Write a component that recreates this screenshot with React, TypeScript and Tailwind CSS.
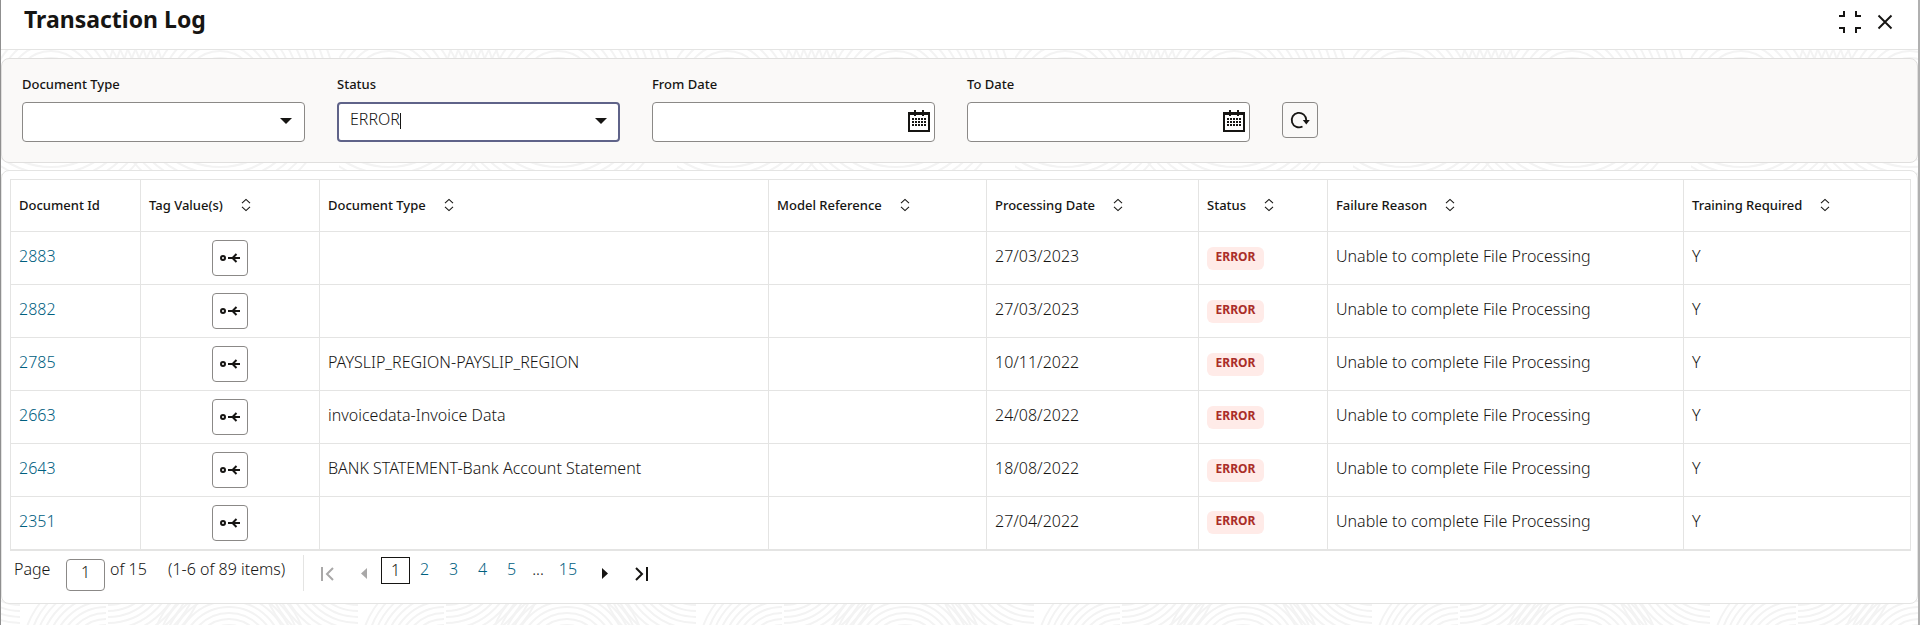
import { useState } from "react";
import type { ReactNode } from "react";

type Row = { id: string; docType: string; date: string };

const ROWS: Row[] = [
  { id: "2883", docType: "", date: "27/03/2023" },
  { id: "2882", docType: "", date: "27/03/2023" },
  { id: "2785", docType: "PAYSLIP_REGION-PAYSLIP_REGION", date: "10/11/2022" },
  { id: "2663", docType: "invoicedata-Invoice Data", date: "24/08/2022" },
  { id: "2643", docType: "BANK STATEMENT-Bank Account Statement", date: "18/08/2022" },
  { id: "2351", docType: "", date: "27/04/2022" },
];

const COLUMNS = [
  { label: "Document Id", width: "w-[130px]", sortable: false },
  { label: "Tag Value(s)", width: "w-[179px]", sortable: true },
  { label: "Document Type", width: "w-[449px]", sortable: true },
  { label: "Model Reference", width: "w-[218px]", sortable: true },
  { label: "Processing Date", width: "w-[212px]", sortable: true },
  { label: "Status", width: "w-[129px]", sortable: true },
  { label: "Failure Reason", width: "w-[356px]", sortable: true },
  { label: "Training Required", width: "w-[227px]", sortable: true },
];

function steps(from: number, to: number, by: number) {
  const out: number[] = [];
  for (let r = from; r <= to; r += by) out.push(r);
  return out;
}

/* Faint ripple texture behind the panels, repeated every 338px. */
function Ripples() {
  return (
    <svg aria-hidden="true" className="pointer-events-none absolute inset-0 h-full w-full">
      <defs>
        <pattern id="ripples" width="338" height="700" patternUnits="userSpaceOnUse">
          <g fill="none" stroke="#f3f3f3" strokeWidth="2">
            {[50, 219].map((cx) =>
              steps(30, 120, 7).map((r) => <circle key={`${cx}-${r}`} cx={cx} cy="88" r={r} />)
            )}
            {steps(30, 84, 6).map((r) => (
              <path key={`a${r}`} d={`M${105 - r} 655A${r} ${r} 0 0 1 105 ${655 - r}`} />
            ))}
            {steps(45, 100, 6).map((r) => (
              <path key={`b${r}`} d={`M107 ${560 + r}A${r} ${r} 0 0 0 ${107 + r} 560`} />
            ))}
            {steps(30, 78, 6).map((r) => (
              <path key={`c${r}`} d={`M${228 - r} 655A${r} ${r} 0 0 1 ${228 + r} 655`} />
            ))}
            {[19, 357].map((cx) =>
              steps(45, 104, 6).map((r) => (
                <path key={`d${cx}-${r}`} d={`M${cx - r} 560A${r} ${r} 0 0 0 ${cx} ${560 + r}`} />
              ))
            )}
          </g>
        </pattern>
      </defs>
      <rect width="100%" height="100%" fill="url(#ripples)" />
    </svg>
  );
}

function CalendarIcon() {
  return (
    <svg width="22" height="22" viewBox="0 0 22 22" fill="#161513" aria-hidden="true">
      <path fillRule="evenodd" d="M0 2h22v20H0zM2 5v15h18V5z" />
      <path d="M6 0h2v6H6zM14 0h2v6h-2z" />
      {[8, 11, 14].map((y) =>
        [4, 7, 10, 13, 16].map((x) => <rect key={`${x}-${y}`} x={x} y={y} width="2" height="2" />)
      )}
    </svg>
  );
}

function RefreshIcon() {
  return (
    <svg width="20" height="20" viewBox="0 0 20 20" aria-hidden="true">
      <path d="M12.5 16.5A7.3 7.3 0 1 1 16.3 10.2" fill="none" stroke="#161513" strokeWidth="1.8" />
      <path d="M12.8 10h7L16.3 14.4z" fill="#161513" />
    </svg>
  );
}

function TagIcon() {
  return (
    <svg width="20" height="12" viewBox="0 0 20 12" fill="none" stroke="#161513" strokeWidth="2" aria-hidden="true">
      <circle cx="3" cy="6" r="2" />
      <path d="M8 6h12M16.500 2L12.500 6l4 4" />
    </svg>
  );
}

function SortIcon() {
  return (
    <svg width="10" height="14" viewBox="0 0 10 14" fill="none" stroke="#161513" strokeWidth="1.1" aria-hidden="true">
      <path d="M1 5.2L5 1.400l4 3.800M1 8.800l4 3.800 4-3.800" />
    </svg>
  );
}

function Field({ id, label, children }: { id: string; label: string; children: ReactNode }) {
  return (
    <div className="flex w-[283px] flex-col">
      <label htmlFor={id} className="pb-2 text-[13px] leading-5 font-medium">
        {label}
      </label>
      <div className="relative flex">{children}</div>
    </div>
  );
}

const inputBase =
  "h-10 w-full rounded bg-white pl-[11px] pr-10 pb-1.5 text-base font-[350] text-[#161513] outline-none";

function ComboField({ id, label, initial, active }: { id: string; label: string; initial: string; active?: boolean }) {
  const [value, setValue] = useState(initial);
  return (
    <Field id={id} label={label}>
      <input
        id={id}
        role="combobox"
        aria-expanded="false"
        aria-controls={`${id}-list`}
        autoComplete="off"
        value={value}
        onChange={(e) => setValue(e.target.value)}
        className={`${inputBase} ${active ? "border-2 border-[#5f6389]" : "border border-[#8b8987]"}`}
      />
      {active && <span className="absolute top-[11px] left-[63px] h-4 w-px bg-[#161513]" />}
      <svg
        width="12"
        height="6"
        viewBox="0 0 12 6"
        fill="#161513"
        aria-hidden="true"
        className="pointer-events-none absolute top-4 right-[13px]"
      >
        <path d="M0 0h12L6 6z" />
      </svg>
    </Field>
  );
}

function DateField({ id, label }: { id: string; label: string }) {
  return (
    <Field id={id} label={label}>
      <input id={id} type="text" className={`${inputBase} border border-[#8b8987]`} />
      <button type="button" aria-label={`Select ${label}`} className="absolute top-2 right-[5px]">
        <CalendarIcon />
      </button>
    </Field>
  );
}

function Cell({ children, className = "" }: { children?: ReactNode; className?: string }) {
  return <td className={`border border-[#e4e4e3] px-2 ${className}`}>{children}</td>;
}

export default function App() {
  return (
    <main className="relative flex min-h-screen flex-col border-r-2 border-l border-r-[#b0b0b0] border-l-[#8f8f8f] bg-white font-[350] text-[#161513] [font-family:'Noto_Sans','Open_Sans',sans-serif]">
      <Ripples />

      <header className="relative flex h-[50px] items-start justify-between border-b border-[#e4e4e3] bg-white pr-[25px] pl-[23px]">
        <h1 className="pt-[3px] text-[23px] leading-8 font-bold">Transaction Log</h1>
        <div className="flex items-center gap-4 pt-[11px]">
          <button type="button" aria-label="Exit full screen">
            <svg width="22" height="22" viewBox="0 0 22 22" fill="none" stroke="#161513" strokeWidth="2">
              <path d="M0 5h5V0M17 0v5h5M0 17h5v5M22 17h-5v5" />
            </svg>
          </button>
          <button type="button" aria-label="Close">
            <svg width="16" height="16" viewBox="0 0 16 16" fill="none" stroke="#161513" strokeWidth="1.9">
              <path d="M1.500 1.500l13 13M14.500 1.500L1.500 14.500" />
            </svg>
          </button>
        </div>
      </header>

      <section
        aria-label="Filters"
        className="relative mt-2 flex h-[105px] items-start gap-8 rounded-lg border border-[#e0dfde] bg-[#faf9f8] px-5 pt-[15px]"
      >
        <ComboField id="document-type" label="Document Type" initial="" />
        <ComboField id="status" label="Status" initial="ERROR" active />
        <DateField id="from-date" label="From Date" />
        <DateField id="to-date" label="To Date" />
        <button
          type="button"
          aria-label="Refresh"
          className="mt-7 flex size-9 items-center justify-center rounded border border-[#8b8987]"
        >
          <RefreshIcon />
        </button>
      </section>

      <section
        aria-label="Transactions"
        className="relative mt-[7px] rounded-lg border border-[#e4e4e3] bg-white px-2 pt-2 pb-3"
      >
        <table className="w-full table-fixed border-collapse border-b-2 border-[#e4e4e3] text-left">
          <thead>
            <tr className="h-[52px]">
              {COLUMNS.map((c) => (
                <th
                  key={c.label}
                  scope="col"
                  className={`${c.width} border border-[#e4e4e3] px-2 text-[13px] leading-5 font-medium`}
                >
                  <span className="flex items-center gap-[18px] pb-0.5">
                    {c.label}
                    {c.sortable && (
                      <button type="button" aria-label={`Sort by ${c.label}`}>
                        <SortIcon />
                      </button>
                    )}
                  </span>
                </th>
              ))}
            </tr>
          </thead>
          <tbody className="text-base leading-5">
            {ROWS.map((r) => (
              <tr key={r.id} className="h-[53px]">
                <Cell className="pb-1">
                  <a href={`#${r.id}`} className="text-[#00607f]">
                    {r.id}
                  </a>
                </Cell>
                <Cell>
                  <button
                    type="button"
                    aria-label={`Tag values of ${r.id}`}
                    className="mx-auto flex size-9 items-center justify-center rounded border border-[#8b8987] bg-white"
                  >
                    <TagIcon />
                  </button>
                </Cell>
                <Cell className="pb-1">{r.docType}</Cell>
                <Cell />
                <Cell className="pb-1">{r.date}</Cell>
                <Cell>
                  <span className="flex h-[23px] w-[57px] justify-center rounded-md bg-[#ffebe8] text-xs leading-5 font-bold text-[#aa2e28]">
                    ERROR
                  </span>
                </Cell>
                <Cell className="pb-1">Unable to complete File Processing</Cell>
                <Cell className="pb-1">Y</Cell>
              </tr>
            ))}
          </tbody>
        </table>

        <nav aria-label="Pagination" className="flex items-start pt-1 pl-1 text-base leading-7">
          <label htmlFor="page" className="w-[52px]">
            Page
          </label>
          <input
            id="page"
            type="text"
            defaultValue="1"
            className="mt-1 h-8 w-[39px] rounded border border-[#8b8987] bg-white pb-1.5 text-center outline-none"
          />
          <span className="w-[63px] pl-[5px]">of 15</span>
          <span className="w-[135px] whitespace-nowrap">(1-6 of 89 items)</span>
          <div className="flex h-9 items-start border-l border-[#e4e4e3] pt-0.5 pl-[17px]">
            <button type="button" aria-label="First page" disabled className="w-10 pt-2.5">
              <svg width="13" height="14" viewBox="0 0 13 14" fill="none" stroke="#a9a8a8" strokeWidth="2">
                <path d="M1 0v14M12 1L6 7l6 6" />
              </svg>
            </button>
            <button type="button" aria-label="Previous page" disabled className="w-5 pt-2.5">
              <svg width="6" height="13" viewBox="0 0 6 13" fill="#a9a8a8">
                <path d="M6 1v11L0 6.500z" />
              </svg>
            </button>
            <button type="button" aria-current="page" className="h-[27px] w-[29px] border border-[#161513] leading-6">
              1
            </button>
            {["2", "3", "4", "5"].map((p) => (
              <a key={p} href={`#page-${p}`} className="w-[29px] text-center leading-6 text-[#00607f]">
                {p}
              </a>
            ))}
            <span className="w-6 text-center leading-6">...</span>
            <a href="#page-15" className="w-9 text-center leading-6 text-[#00607f]">
              15
            </a>
            <button type="button" aria-label="Next page" className="ml-4 w-[33px] pt-2.5">
              <svg width="6" height="13" viewBox="0 0 6 13" fill="#161513">
                <path d="M0 1v11l6-5.500z" />
              </svg>
            </button>
            <button type="button" aria-label="Last page" className="pt-2.5">
              <svg width="13" height="14" viewBox="0 0 13 14" fill="none" stroke="#161513" strokeWidth="2">
                <path d="M12 0v14M1 1l6 6-6 6" />
              </svg>
            </button>
          </div>
        </nav>
      </section>
    </main>
  );
}
